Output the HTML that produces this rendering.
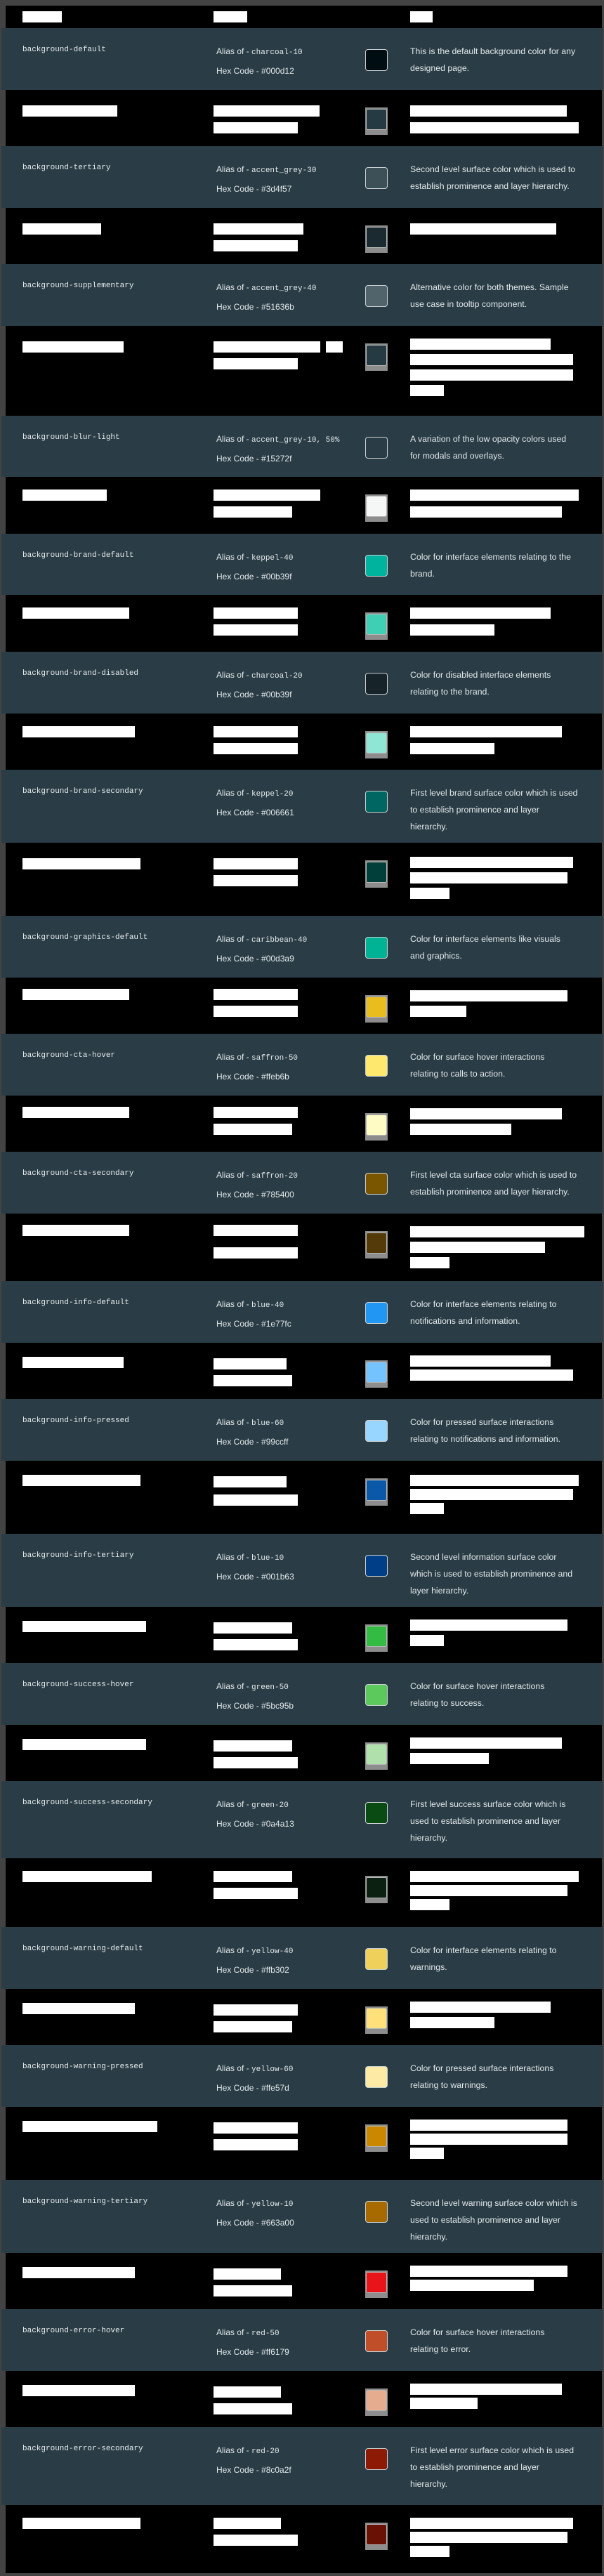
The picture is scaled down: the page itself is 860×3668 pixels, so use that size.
<!DOCTYPE html>
<html><head><meta charset="utf-8">
<style>
*{margin:0;padding:0;box-sizing:border-box}
html,body{width:860px;height:3668px;background:#434343;overflow:hidden;position:relative}
.t{position:absolute;left:2px;width:856px;background:#2a3c45}
.b{position:absolute;left:8px;width:849px;background:#000}
.n{position:absolute;left:30px;top:24px;font:11px/14px "Liberation Mono",monospace;color:#e6ecee;white-space:nowrap}
.a{position:absolute;left:306px;top:19px;font:12px/28px "Liberation Sans",sans-serif;color:#e2e9eb;white-space:nowrap}
.a span{font:11px "Liberation Mono",monospace}
.s{position:absolute;left:518px;top:30px;width:32px;height:31px;border:1px solid #c9d0d3;border-radius:4px}
.d{position:absolute;left:582px;top:21px;font:12.3px/24px "Liberation Sans",sans-serif;color:#e2e9eb;white-space:nowrap}
.w{position:absolute;background:#fff;height:16px}
.bs{position:absolute;left:512px;top:25px;width:32px;height:39px;background:#8d8d8d}
.bs i{position:absolute;left:1px;top:2px;width:30px;height:30px;border:1px solid #b5b5b5;border-radius:3px;display:block}
</style></head><body>

<div class="b" style="top:8px;height:32px">
<div class="w" style="left:24px;top:8px;width:56px"></div>
<div class="w" style="left:296px;top:8px;width:48px"></div>
<div class="w" style="left:576px;top:8px;width:32px"></div>
</div>

<div class="t" style="top:40px;height:88px"><div class="n">background-default</div><div class="a">Alias of - <span>charcoal-10</span><br>Hex Code - #000d12</div><div class="s" style="background:#000d12"></div><div class="d">This is the default background color for any<br>designed page.</div></div>
<div class="b" style="top:128px;height:80px"><div class="w" style="left:24px;top:22px;width:135px"></div><div class="w" style="left:296px;top:22px;width:151px"></div><div class="w" style="left:296px;top:46px;width:120px"></div><div class="bs"><i style="background:#263a44"></i></div><div class="w" style="left:576px;top:22px;width:223px"></div><div class="w" style="left:576px;top:46px;width:240px"></div></div>

<div class="t" style="top:208px;height:88px"><div class="n">background-tertiary</div><div class="a">Alias of - <span>accent_grey-30</span><br>Hex Code - #3d4f57</div><div class="s" style="background:#3d4f57"></div><div class="d">Second level surface color which is used to<br>establish prominence and layer hierarchy.</div></div>
<div class="b" style="top:296px;height:80px"><div class="w" style="left:24px;top:22px;width:112px"></div><div class="w" style="left:296px;top:22px;width:128px"></div><div class="w" style="left:296px;top:46px;width:120px"></div><div class="bs"><i style="background:#1b2a30"></i></div><div class="w" style="left:576px;top:22px;width:208px"></div></div>

<div class="t" style="top:376px;height:88px"><div class="n">background-supplementary</div><div class="a">Alias of - <span>accent_grey-40</span><br>Hex Code - #51636b</div><div class="s" style="background:#51636b"></div><div class="d">Alternative color for both themes. Sample<br>use case in tooltip component.</div></div>
<div class="b" style="top:464px;height:128px"><div class="w" style="left:24px;top:22px;width:144px"></div><div class="w" style="left:296px;top:22px;width:152px"></div><div class="w" style="left:456px;top:22px;width:24px"></div><div class="w" style="left:296px;top:46px;width:120px"></div><div class="bs"><i style="background:#263a44"></i></div><div class="w" style="left:576px;top:18px;width:200px"></div><div class="w" style="left:576px;top:40px;width:232px"></div><div class="w" style="left:576px;top:62px;width:232px"></div><div class="w" style="left:576px;top:84px;width:48px"></div></div>

<div class="t" style="top:592px;height:87px"><div class="n">background-blur-light</div><div class="a">Alias of - <span>accent_grey-10, 50%</span><br>Hex Code - #15272f</div><div class="s" style="background:#2a3c45"></div><div class="d">A variation of the low opacity colors used<br>for modals and overlays.</div></div>
<div class="b" style="top:679px;height:81px"><div class="w" style="left:24px;top:18px;width:120px"></div><div class="w" style="left:296px;top:18px;width:152px"></div><div class="w" style="left:296px;top:42px;width:112px"></div><div class="bs"><i style="background:#f5f7f7"></i></div><div class="w" style="left:576px;top:18px;width:240px"></div><div class="w" style="left:576px;top:42px;width:216px"></div></div>

<div class="t" style="top:760px;height:87px"><div class="n">background-brand-default</div><div class="a">Alias of - <span>keppel-40</span><br>Hex Code - #00b39f</div><div class="s" style="background:#00b39f"></div><div class="d">Color for interface elements relating to the<br>brand.</div></div>
<div class="b" style="top:847px;height:81px"><div class="w" style="left:24px;top:18px;width:152px"></div><div class="w" style="left:296px;top:18px;width:120px"></div><div class="w" style="left:296px;top:42px;width:120px"></div><div class="bs"><i style="background:#3ecfb5"></i></div><div class="w" style="left:576px;top:18px;width:200px"></div><div class="w" style="left:576px;top:42px;width:120px"></div></div>

<div class="t" style="top:928px;height:88px"><div class="n">background-brand-disabled</div><div class="a">Alias of - <span>charcoal-20</span><br>Hex Code - #00b39f</div><div class="s" style="background:#16242a"></div><div class="d">Color for disabled interface elements<br>relating to the brand.</div></div>
<div class="b" style="top:1016px;height:80px"><div class="w" style="left:24px;top:18px;width:160px"></div><div class="w" style="left:296px;top:18px;width:120px"></div><div class="w" style="left:296px;top:42px;width:120px"></div><div class="bs"><i style="background:#8fe6d4"></i></div><div class="w" style="left:576px;top:18px;width:216px"></div><div class="w" style="left:576px;top:42px;width:120px"></div></div>

<div class="t" style="top:1096px;height:104px"><div class="n">background-brand-secondary</div><div class="a">Alias of - <span>keppel-20</span><br>Hex Code - #006661</div><div class="s" style="background:#006661"></div><div class="d">First level brand surface color which is used<br>to establish prominence and layer<br>hierarchy.</div></div>
<div class="b" style="top:1200px;height:104px"><div class="w" style="left:24px;top:22px;width:168px"></div><div class="w" style="left:296px;top:22px;width:120px"></div><div class="w" style="left:296px;top:46px;width:120px"></div><div class="bs"><i style="background:#013f3b"></i></div><div class="w" style="left:576px;top:20px;width:232px"></div><div class="w" style="left:576px;top:42px;width:224px"></div><div class="w" style="left:576px;top:64px;width:56px"></div></div>

<div class="t" style="top:1304px;height:88px"><div class="n">background-graphics-default</div><div class="a">Alias of - <span>caribbean-40</span><br>Hex Code - #00d3a9</div><div class="s" style="background:#00b394"></div><div class="d">Color for interface elements like visuals<br>and graphics.</div></div>
<div class="b" style="top:1392px;height:80px"><div class="w" style="left:24px;top:16px;width:152px"></div><div class="w" style="left:296px;top:16px;width:120px"></div><div class="w" style="left:296px;top:40px;width:120px"></div><div class="bs"><i style="background:#e9bd1e"></i></div><div class="w" style="left:576px;top:18px;width:224px"></div><div class="w" style="left:576px;top:40px;width:80px"></div></div>

<div class="t" style="top:1472px;height:88px"><div class="n">background-cta-hover</div><div class="a">Alias of - <span>saffron-50</span><br>Hex Code - #ffeb6b</div><div class="s" style="background:#ffe86e"></div><div class="d">Color for surface hover interactions<br>relating to calls to action.</div></div>
<div class="b" style="top:1560px;height:80px"><div class="w" style="left:24px;top:16px;width:152px"></div><div class="w" style="left:296px;top:16px;width:120px"></div><div class="w" style="left:296px;top:40px;width:112px"></div><div class="bs"><i style="background:#fffbc4"></i></div><div class="w" style="left:576px;top:18px;width:216px"></div><div class="w" style="left:576px;top:40px;width:144px"></div></div>

<div class="t" style="top:1640px;height:88px"><div class="n">background-cta-secondary</div><div class="a">Alias of - <span>saffron-20</span><br>Hex Code - #785400</div><div class="s" style="background:#7a5600"></div><div class="d">First level cta surface color which is used to<br>establish prominence and layer hierarchy.</div></div>
<div class="b" style="top:1728px;height:96px"><div class="w" style="left:24px;top:16px;width:152px"></div><div class="w" style="left:296px;top:16px;width:120px"></div><div class="w" style="left:296px;top:48px;width:120px"></div><div class="bs"><i style="background:#543a08"></i></div><div class="w" style="left:576px;top:18px;width:248px"></div><div class="w" style="left:576px;top:40px;width:192px"></div><div class="w" style="left:576px;top:62px;width:56px"></div></div>

<div class="t" style="top:1824px;height:88px"><div class="n">background-info-default</div><div class="a">Alias of - <span>blue-40</span><br>Hex Code - #1e77fc</div><div class="s" style="background:#2196f3"></div><div class="d">Color for interface elements relating to<br>notifications and information.</div></div>
<div class="b" style="top:1912px;height:80px"><div class="w" style="left:24px;top:20px;width:144px"></div><div class="w" style="left:296px;top:22px;width:104px"></div><div class="w" style="left:296px;top:46px;width:112px"></div><div class="bs"><i style="background:#74c3ff"></i></div><div class="w" style="left:576px;top:18px;width:200px"></div><div class="w" style="left:576px;top:38px;width:232px"></div></div>

<div class="t" style="top:1992px;height:88px"><div class="n">background-info-pressed</div><div class="a">Alias of - <span>blue-60</span><br>Hex Code - #99ccff</div><div class="s" style="background:#99d6ff"></div><div class="d">Color for pressed surface interactions<br>relating to notifications and information.</div></div>
<div class="b" style="top:2080px;height:104px"><div class="w" style="left:24px;top:20px;width:168px"></div><div class="w" style="left:296px;top:22px;width:104px"></div><div class="w" style="left:296px;top:48px;width:120px"></div><div class="bs"><i style="background:#0b57a8"></i></div><div class="w" style="left:576px;top:20px;width:240px"></div><div class="w" style="left:576px;top:40px;width:232px"></div><div class="w" style="left:576px;top:60px;width:48px"></div></div>

<div class="t" style="top:2184px;height:104px"><div class="n">background-info-tertiary</div><div class="a">Alias of - <span>blue-10</span><br>Hex Code - #001b63</div><div class="s" style="background:#003f88"></div><div class="d">Second level information surface color<br>which is used to establish prominence and<br>layer hierarchy.</div></div>
<div class="b" style="top:2288px;height:80px"><div class="w" style="left:24px;top:20px;width:176px"></div><div class="w" style="left:296px;top:22px;width:112px"></div><div class="w" style="left:296px;top:46px;width:120px"></div><div class="bs"><i style="background:#33bb44"></i></div><div class="w" style="left:576px;top:18px;width:224px"></div><div class="w" style="left:576px;top:40px;width:48px"></div></div>

<div class="t" style="top:2368px;height:88px"><div class="n">background-success-hover</div><div class="a">Alias of - <span>green-50</span><br>Hex Code - #5bc95b</div><div class="s" style="background:#5bc95b"></div><div class="d">Color for surface hover interactions<br>relating to success.</div></div>
<div class="b" style="top:2456px;height:80px"><div class="w" style="left:24px;top:20px;width:176px"></div><div class="w" style="left:296px;top:22px;width:112px"></div><div class="w" style="left:296px;top:46px;width:120px"></div><div class="bs"><i style="background:#b0e0ac"></i></div><div class="w" style="left:576px;top:18px;width:216px"></div><div class="w" style="left:576px;top:40px;width:112px"></div></div>

<div class="t" style="top:2536px;height:110px"><div class="n">background-success-secondary</div><div class="a">Alias of - <span>green-20</span><br>Hex Code - #0a4a13</div><div class="s" style="background:#0a4a13"></div><div class="d">First level success surface color which is<br>used to establish prominence and layer<br>hierarchy.</div></div>
<div class="b" style="top:2646px;height:98px"><div class="w" style="left:24px;top:18px;width:184px"></div><div class="w" style="left:296px;top:18px;width:112px"></div><div class="w" style="left:296px;top:42px;width:120px"></div><div class="bs"><i style="background:#0b2010"></i></div><div class="w" style="left:576px;top:18px;width:240px"></div><div class="w" style="left:576px;top:38px;width:224px"></div><div class="w" style="left:576px;top:58px;width:56px"></div></div>

<div class="t" style="top:2744px;height:88px"><div class="n">background-warning-default</div><div class="a">Alias of - <span>yellow-40</span><br>Hex Code - #ffb302</div><div class="s" style="background:#efd05a"></div><div class="d">Color for interface elements relating to<br>warnings.</div></div>
<div class="b" style="top:2832px;height:80px"><div class="w" style="left:24px;top:20px;width:160px"></div><div class="w" style="left:296px;top:22px;width:120px"></div><div class="w" style="left:296px;top:46px;width:112px"></div><div class="bs"><i style="background:#ffe07a"></i></div><div class="w" style="left:576px;top:18px;width:200px"></div><div class="w" style="left:576px;top:40px;width:120px"></div></div>

<div class="t" style="top:2912px;height:88px"><div class="n">background-warning-pressed</div><div class="a">Alias of - <span>yellow-60</span><br>Hex Code - #ffe57d</div><div class="s" style="background:#fdeaa5"></div><div class="d">Color for pressed surface interactions<br>relating to warnings.</div></div>
<div class="b" style="top:3000px;height:104px"><div class="w" style="left:24px;top:20px;width:192px"></div><div class="w" style="left:296px;top:22px;width:120px"></div><div class="w" style="left:296px;top:46px;width:120px"></div><div class="bs"><i style="background:#c98800"></i></div><div class="w" style="left:576px;top:18px;width:224px"></div><div class="w" style="left:576px;top:38px;width:224px"></div><div class="w" style="left:576px;top:58px;width:48px"></div></div>

<div class="t" style="top:3104px;height:104px"><div class="n">background-warning-tertiary</div><div class="a">Alias of - <span>yellow-10</span><br>Hex Code - #663a00</div><div class="s" style="background:#a66a00"></div><div class="d">Second level warning surface color which is<br>used to establish prominence and layer<br>hierarchy.</div></div>
<div class="b" style="top:3208px;height:80px"><div class="w" style="left:24px;top:20px;width:160px"></div><div class="w" style="left:296px;top:22px;width:96px"></div><div class="w" style="left:296px;top:46px;width:112px"></div><div class="bs"><i style="background:#e8141a"></i></div><div class="w" style="left:576px;top:18px;width:224px"></div><div class="w" style="left:576px;top:38px;width:176px"></div></div>

<div class="t" style="top:3288px;height:88px"><div class="n">background-error-hover</div><div class="a">Alias of - <span>red-50</span><br>Hex Code - #ff6179</div><div class="s" style="background:#c04e28"></div><div class="d">Color for surface hover interactions<br>relating to error.</div></div>
<div class="b" style="top:3376px;height:80px"><div class="w" style="left:24px;top:20px;width:160px"></div><div class="w" style="left:296px;top:22px;width:96px"></div><div class="w" style="left:296px;top:46px;width:112px"></div><div class="bs"><i style="background:#e5ac90"></i></div><div class="w" style="left:576px;top:18px;width:216px"></div><div class="w" style="left:576px;top:38px;width:96px"></div></div>

<div class="t" style="top:3456px;height:111px"><div class="n">background-error-secondary</div><div class="a">Alias of - <span>red-20</span><br>Hex Code - #8c0a2f</div><div class="s" style="background:#8c1a05"></div><div class="d">First level error surface color which is used<br>to establish prominence and layer<br>hierarchy.</div></div>
<div class="b" style="top:3567px;height:97px"><div class="w" style="left:24px;top:18px;width:168px"></div><div class="w" style="left:296px;top:18px;width:96px"></div><div class="w" style="left:296px;top:42px;width:120px"></div><div class="bs"><i style="background:#6a1106"></i></div><div class="w" style="left:576px;top:18px;width:232px"></div><div class="w" style="left:576px;top:38px;width:224px"></div><div class="w" style="left:576px;top:58px;width:56px"></div></div>

</body></html>
